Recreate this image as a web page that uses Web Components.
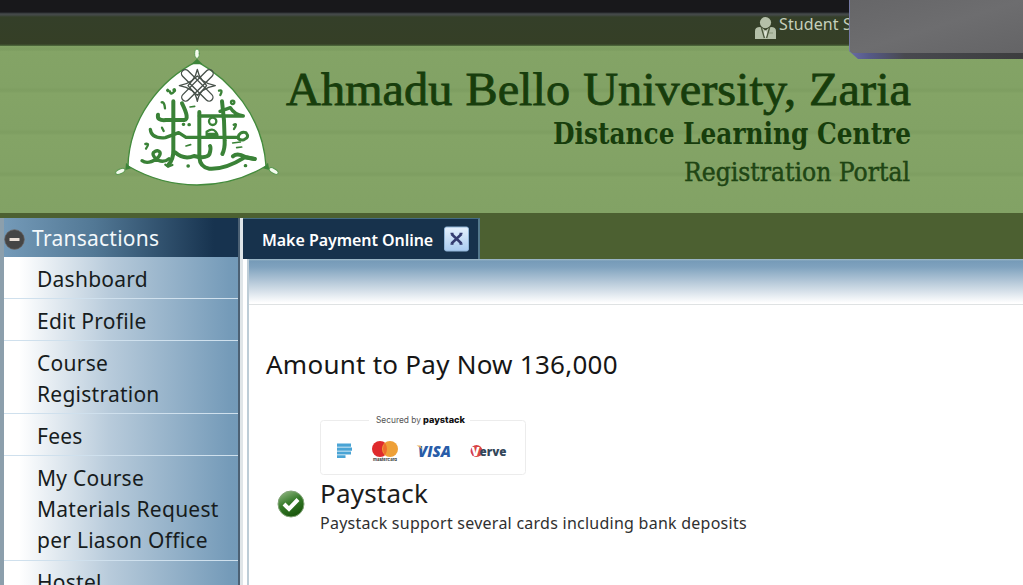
<!DOCTYPE html>
<html lang="en">
<head>
<meta charset="utf-8">
<title>Registration Portal</title>
<style>
  body {
    margin: 0;
    width: 1023px;
    height: 585px;
    overflow: hidden;
    background: #fff;
    font-family: "Noto Sans", "Open Sans", sans-serif;
  }
</style>
</head>
<body>
<portal-page>
  <top-bar slot="top">Student S</top-bar>
  <portal-banner slot="banner"></portal-banner>
  <side-menu slot="menu" heading="Transactions">
    <menu-entry>Dashboard</menu-entry>
    <menu-entry>Edit Profile</menu-entry>
    <menu-entry>Course<br>Registration</menu-entry>
    <menu-entry>Fees</menu-entry>
    <menu-entry>My Course<br>Materials Request<br>per Liason Office</menu-entry>
    <menu-entry>Hostel</menu-entry>
  </side-menu>
  <tab-panel label="Make Payment Online">
    <payment-form amount="136,000">
      <pay-option name="Paystack">Paystack support several cards including bank deposits</pay-option>
    </payment-form>
  </tab-panel>
</portal-page>

<script>
class PortalPage extends HTMLElement {
  constructor() {
    super();
    this.attachShadow({ mode: 'open' }).innerHTML = `
      <style>
        :host { display: flex; flex-direction: column; position: relative; width: 1023px; height: 585px; overflow: hidden; }
        .body { flex: 1; display: flex; min-height: 0; background: linear-gradient(#4c6031 41px, #fff 41px); }
        .overlay { position: absolute; right: 0; top: 0; }
      </style>
      <slot name="top"></slot>
      <slot name="banner"></slot>
      <div class="body">
        <slot name="menu"></slot>
        <slot></slot>
      </div>
      <svg class="overlay" width="174" height="60" viewBox="0 0 174 60">
        <defs>
          <linearGradient id="face" x1="0" y1="0" x2="1" y2="1">
            <stop offset="0" stop-color="#666668"/><stop offset=".5" stop-color="#6d6d6f"/><stop offset="1" stop-color="#646466"/>
          </linearGradient>
          <linearGradient id="edge">
            <stop offset="0" stop-color="#686ca6"/><stop offset=".12" stop-color="#555986"/><stop offset=".32" stop-color="#48494f"/><stop offset="1" stop-color="#3c3d3e"/>
          </linearGradient>
        </defs>
        <path d="M0 0H174V59H9L0 51Z" fill="url(#edge)"/>
        <path d="M1 0H174V53H3L1 51Z" fill="url(#face)"/>
        <path d="M.5 0V51" stroke="#7579a3" fill="none"/>
      </svg>`;
  }
}

class TopBar extends HTMLElement {
  constructor() {
    super();
    this.attachShadow({ mode: 'open' }).innerHTML = `
      <style>
        :host { display: block; flex: none; height: 46px; box-sizing: border-box; background: linear-gradient(#18181b 12px, #303437 13px, #454a4a 14px, #434847 15px, #343f29 17px, #353f26 44px, #53703f 46px); }
        .user { display: flex; align-items: flex-start; gap: 3px; padding: 14px 0 0 755px; color: #c5cfbb; font-size: 16px; line-height: 21px; letter-spacing: .1px; white-space: nowrap; }
        svg { margin-top: 3px; }
      </style>
      <div class="user">
        <svg width="21" height="23" viewBox="0 0 21 23">
          <circle cx="10.5" cy="5.6" r="5.6" fill="#b4bfa8"/>
          <path d="M0 22V14Q0 10 5 10L8.7 12 10.5 14 12.3 12 16 10Q21 10 21 14V22Z" fill="#b4bfa8"/>
          <path d="M6.5 11L9.4 21M14.5 11L11.6 21" stroke="#4b573c" stroke-width="1.3"/>
          <path d="M10.5 13L12 15.5 11.2 19 10.5 21 9.8 19 9 15.5Z" fill="#dce2d4"/>
          <path d="M14 16H18" stroke="#89977b"/>
        </svg>
        <slot></slot>
      </div>`;
  }
}

class PortalBanner extends HTMLElement {
  constructor() {
    super();
    // crest coordinates are three units to a pixel
    this.attachShadow({ mode: 'open' }).innerHTML = `
      <style>
        :host {
          display: flex; flex: none; height: 172px; box-sizing: border-box; padding-left: 100px;
          border-bottom: 5px solid #4c6031;
          background: repeating-linear-gradient(#84a466 0, #82a265 36px, #7e9e61 39px, #80a063 41px, #84a466 42px) 0 5px, #82a265;
        }
        svg { display: block; flex: none; overflow: visible; }
        .name { margin-left: -14px; }
      </style>
      <svg width="200" height="167" viewBox="0 18 600 501" fill="none" stroke="#3a8237" stroke-linecap="round" stroke-linejoin="round">
        <path d="M291 64C390 120 488 225 498 378Q405 434 291 435Q180 434 84 378C88 235 180 120 291 64Z" fill="#fff" stroke="#438b3c" stroke-width="4"/>
        <path d="M274 73L291 56 308 73ZM78 368L94 385 76 390ZM504 368L489 385 508 390Z" fill="#3d853a" stroke="none"/>
        <g fill="#f4fbef" stroke="#5b9950" stroke-width="3">
          <ellipse cx="291" cy="41" rx="7" ry="14"/>
          <ellipse cx="61" cy="394" rx="15" ry="7" transform="rotate(-25 61 394)"/>
          <ellipse cx="521" cy="393" rx="15" ry="7" transform="rotate(30 521 393)"/>
        </g>
        <g stroke="#465049" stroke-width="4">
          <rect x="230" y="125" width="124" height="23" rx="11.5" transform="rotate(45 292 136)"/>
          <rect x="230" y="125" width="124" height="23" rx="11.5" transform="rotate(-45 292 136)"/>
          <path d="M292 88Q296 108 306 120L320 137 306 153Q296 164 292 184Q288 164 278 153L264 137 278 120Q288 108 292 88Z"/>
          <path d="M238 137Q260 133 275 122L292 108 309 122Q324 133 346 137Q324 141 309 151L292 166 275 151Q260 141 238 137Z"/>
        </g>
        <g stroke-width="12">
          <path d="M220 184V330Q221 358 204 376"/>
          <path d="M246 190Q270 238 253 240H198Q170 243 174 224"/>
          <path d="M298 216V352Q300 381 328 386Q375 389 434 352L464 357"/>
          <path d="M366 184Q374 240 374 302Q375 326 367 342"/>
          <path d="M298 228H430Q402 223 391 203L360 214" stroke-width="10"/>
          <path d="M151 268Q154 297 196 293Q216 286 236 278L258 292H414" stroke-width="10"/>
          <path d="M414 292Q419 273 438 278Q450 292 432 299Q416 302 414 292" stroke-width="9"/>
          <path d="M126 362Q142 374 170 357Q190 337 172 332Q151 337 164 352Q185 374 207 356" stroke-width="10"/>
          <path d="M225 337Q252 361 282 348Q320 357 328 343Q334 325 330 318"/>
          <path d="M399 349Q412 337 436 351L464 357"/>
        </g>
        <g stroke-width="7">
          <circle cx="338" cy="244" r="11"/><circle cx="398" cy="187" r="5"/>
          <path d="M320 275Q338 263 347 275T350 288H320V275M326 282H346M185 187Q193 184 195 205M210 154Q211 168 225 152M357 152Q370 148 361 165M186 263L191 273M401 254Q414 247 402 267M136 312Q151 308 138 326M196 374L204 380 217 375"/>
          <path d="M270 201L284 199M398 309L421 306M410 323L425 321M258 318L272 314" stroke-width="5"/>
          <path d="M250 253h1M267 254h1M264 378h1M436 377h1M203 151l1 1M222 150l1-1" stroke-width="10"/>
        </g>
      </svg>
      <svg class="name" width="640" height="167" viewBox="286 46 640 167" fill="#173d0c" stroke="#173d0c">
        <text x="286" y="105" font-family="Liberation Serif, serif" font-size="46" stroke-width=".8" textLength="625" lengthAdjust="spacingAndGlyphs" word-spacing="1">Ahmadu Bello University, Zaria</text>
        <text x="553" y="144" font-family="DejaVu Serif Condensed, DejaVu Serif, serif" font-stretch="condensed" font-size="29" font-weight="700" stroke="none" textLength="358" lengthAdjust="spacingAndGlyphs">Distance Learning Centre</text>
        <text x="684" y="180.500" font-family="DejaVu Serif Condensed, DejaVu Serif, serif" font-stretch="condensed" font-size="26" stroke-width=".4" textLength="226" lengthAdjust="spacingAndGlyphs" fill="#214716">Registration Portal</text>
      </svg>`;
  }
}

class SideMenu extends HTMLElement {
  connectedCallback() {
    this.attachShadow({ mode: 'open' }).innerHTML = `
      <style>
        :host { display: block; flex: none; width: 243px; height: 367px; box-sizing: border-box; border-left: 4px solid #8c9fac; border-right: 3px solid #dfe5e8; background: #fff; overflow: hidden; }
        .inner { border-right: 2px solid #4c6174; min-height: 367px; background: linear-gradient(90deg, #fff 0, #fff 15px, #b8cbdb 105px, #759bb9 225px, #739ab8); }
        h2 { margin: 0; height: 39px; display: flex; align-items: center; gap: 7px; font-size: 21px; letter-spacing: .25px; font-weight: 400; color: #f3f8fb; background: linear-gradient(90deg, #749ab8 0, #527895 90px, #17334f 210px, #17334f); }
        h2 svg { flex: none; overflow: visible; }
        h2 span { padding-top: 1px; }
      </style>
      <div class="inner">
        <h2>
          <svg width="21" height="21" viewBox="0 0 21 21"><circle cx="10.500" cy="12.500" r="9.800" fill="#454545" stroke="#6b625c" stroke-width=".7"/><rect x="5.500" y="11" width="10" height="3" rx=".5" fill="#eadfd6"/></svg>
          <span>${this.getAttribute('heading')}</span>
        </h2>
        <slot></slot>
      </div>`;
  }
}

class MenuEntry extends HTMLElement {
  constructor() {
    super();
    this.attachShadow({ mode: 'open' }).innerHTML = `
      <style>
        :host { display: block; box-sizing: border-box; padding: 6.600px 0 3.200px 33px; border-bottom: 1px solid #cfe0ed; font-size: 21px; line-height: 31.200px; letter-spacing: .25px; color: #171c20; white-space: nowrap; }
      </style>
      <slot></slot>`;
  }
}

class TabPanel extends HTMLElement {
  connectedCallback() {
    this.attachShadow({ mode: 'open' }).innerHTML = `
      <style>
        :host { display: flex; flex-direction: column; flex: 1; min-width: 0; }
        .tab { flex: none; display: flex; align-items: center; justify-content: space-between; width: 237px; height: 41px; box-sizing: border-box; padding: 0 9px 0 19px; background: #17324c; border-top: 1px solid #456c83; border-right: 2px solid #54788b; color: #fff; font-size: 16px; font-weight: 600; letter-spacing: -.05px; white-space: nowrap; }
        .tab span { padding-top: 2px; }
        .tab svg { margin-bottom: 1px; }
        .panel { flex: 1; box-sizing: border-box; margin-left: 4px; border-left: 2px solid #bdcdd7; background: #fff; }
        .strip { height: 45px; border-bottom: 1px solid #dfe2e3; background: linear-gradient(#a4bdca 0, #769bb8 2px, #7fa2be 8px, #c4d3e0 27px, #fff 44px); }
      </style>
      <div class="tab">
        <span>${this.getAttribute('label')}</span>
        <svg width="25" height="26" viewBox="0 0 25 26">
          <defs><linearGradient id="g" x2="0" y2="1"><stop stop-color="#e5f1fd"/><stop offset="1" stop-color="#a9cbf0"/></linearGradient></defs>
          <rect x=".5" y="1" width="24" height="24" rx="2" fill="url(#g)" stroke="#91b5d7"/>
          <path d="M7.500 8L17.500 17.500M17.500 8L7.500 17.500" stroke="#343c70" stroke-width="2.500"/>
          <path d="M6.500 7.500H9.500M15.500 7.500H18.500M6.500 18H9.500M15.500 18H18.500" stroke="#343c70" stroke-width="1.500"/>
        </svg>
      </div>
      <div class="panel"><div class="strip"></div><slot></slot></div>`;
  }
}

class PaymentForm extends HTMLElement {
  connectedCallback() {
    this.attachShadow({ mode: 'open' }).innerHTML = `
      <style>
        :host { display: block; padding: 41px 0 0 17px; }
        h1 { margin: 0; font-size: 26px; line-height: 36px; font-weight: 400; letter-spacing: .25px; color: #161616; white-space: nowrap; }
      </style>
      <h1>Amount to Pay Now ${this.getAttribute('amount')}</h1>
      <slot></slot>`;
  }
}

class PayOption extends HTMLElement {
  connectedCallback() {
    this.attachShadow({ mode: 'open' }).innerHTML = `
      <style>
        :host { display: grid; grid-template-columns: 28px 1fr; column-gap: 15px; margin: 30px 0 0 11px; }
        .tick { align-self: start; margin-top: 78px; }
        h3 { margin: 0; font-size: 26px; line-height: 36px; font-weight: 400; letter-spacing: .2px; color: #1c1c1c; }
        p { margin: 0; font-size: 16px; line-height: 24px; letter-spacing: .25px; color: #303030; white-space: nowrap; }
        svg { display: block; }
      </style>
      <svg class="tick" width="28" height="28" viewBox="0 0 28 28">
        <defs><linearGradient id="ball" x1=".2" y1="0" x2=".7" y2="1"><stop stop-color="#8fb580"/><stop offset=".45" stop-color="#377b2b"/><stop offset="1" stop-color="#155208"/></linearGradient></defs>
        <circle cx="14" cy="14" r="13" fill="url(#ball)" stroke="#82a477"/>
        <path d="M7 14L12 19 21 9.500" fill="none" stroke="#fff" stroke-width="4"/>
      </svg>
      <div>
        <svg width="207" height="63" viewBox="0 0 207 63" font-family="Inter, sans-serif">
          <rect x=".5" y="8.500" width="205" height="54" rx="3" fill="#fff" stroke="#ececec"/>
          <path d="M49 8.500H150" stroke="#fff" stroke-width="3"/>
          <text x="56" y="11" font-size="8.500" fill="#555" textLength="45" lengthAdjust="spacingAndGlyphs">Secured by</text>
          <text x="103" y="11" font-size="9" font-weight="800" fill="#111" textLength="42" lengthAdjust="spacingAndGlyphs">paystack</text>
          <path d="M17 31.500H31V34.800H17ZM17 35.500H32V38.700H17ZM17 39.400H31V42.600H17ZM17 43.300H25.500V46H17Z" fill="#4aa4d5"/>
          <circle cx="60" cy="37" r="8" fill="#df2a2c"/><circle cx="70" cy="37" r="8" fill="#eea037"/>
          <path d="M65 30.700Q69 37 65 43.300Q61 37 65 30.700Z" fill="#ef6c2d"/>
          <text x="53" y="48.600" font-size="4" font-weight="700" fill="#333" textLength="24" lengthAdjust="spacingAndGlyphs">mastercard</text>
          <text x="98" y="44.500" font-family="Open Sans, sans-serif" font-size="15.500" font-weight="800" font-style="italic" fill="#285ca8" textLength="33" lengthAdjust="spacingAndGlyphs">VISA</text>
          <path d="M96.500 33.500H100.500L102 37.500Q100 35 96.500 33.500Z" fill="#e9ad56"/>
          <circle cx="156.500" cy="39" r="6" fill="#d84345"/>
          <text x="151.500" y="44" font-family="Open Sans, sans-serif" font-size="12" font-weight="800" fill="#33475a" textLength="35" lengthAdjust="spacingAndGlyphs"><tspan fill="#fff">V</tspan>erve</text>
        </svg>
        <h3>${this.getAttribute('name')}</h3>
        <p><slot></slot></p>
      </div>`;
  }
}

customElements.define('portal-page', PortalPage);
customElements.define('top-bar', TopBar);
customElements.define('portal-banner', PortalBanner);
customElements.define('side-menu', SideMenu);
customElements.define('menu-entry', MenuEntry);
customElements.define('tab-panel', TabPanel);
customElements.define('payment-form', PaymentForm);
customElements.define('pay-option', PayOption);
</script>
</body>
</html>
